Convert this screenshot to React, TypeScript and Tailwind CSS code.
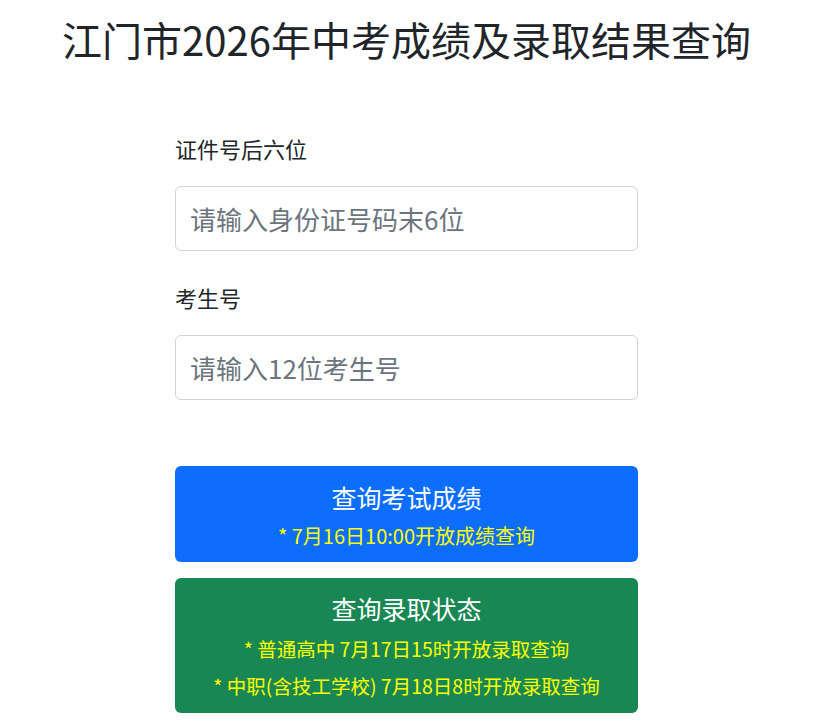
import { useState } from 'react';

const FONT = "font-['Noto_Sans_CJK_SC','Noto_Sans',sans-serif]";

interface FieldProps {
  label: string;
  placeholder: string;
  value: string;
  onChange: (v: string) => void;
  maxLength: number;
}

function Field({ label, placeholder, value, onChange, maxLength }: FieldProps) {
  return (
    <div className="flex flex-col">
      <label className="text-[22px] leading-[33px] text-[#212529]">{label}</label>
      <input
        type="text"
        value={value}
        maxLength={maxLength}
        onChange={(e) => onChange(e.target.value)}
        placeholder={placeholder}
        className={`${FONT} mt-[21px] h-[65px] w-full rounded-md border border-[#ced4da] bg-white px-[14px] text-[26px] text-[#212529] placeholder:text-[#6c757d] outline-none focus:border-[#86b7fe]`}
      />
    </div>
  );
}

export default function App() {
  const [idTail, setIdTail] = useState('');
  const [examNo, setExamNo] = useState('');

  return (
    <div className={`${FONT} min-h-[725px] w-[813px] bg-white`}>
      <h1 className="pt-[14px] text-center text-[40px] leading-[50px] text-[#212529]">
        江门市2026年中考成绩及录取结果查询
      </h1>

      <div className="mx-auto mt-[68px] w-[463px]">
        <Field
          label="证件号后六位"
          placeholder="请输入身份证号码末6位"
          value={idTail}
          onChange={setIdTail}
          maxLength={6}
        />
        <div className="mt-[30px]">
          <Field
            label="考生号"
            placeholder="请输入12位考生号"
            value={examNo}
            onChange={setExamNo}
            maxLength={12}
          />
        </div>

        {/* query buttons */}
        <button
          type="button"
          className="mt-[66px] flex w-full flex-col items-center rounded-md bg-[#0d6efd] pb-[8px] pt-[13px]"
        >
          <span className="text-[25px] leading-[36px] text-white">查询考试成绩</span>
          <span className="mt-[2px] text-[20px] leading-[37px] text-[#ffff00]">
            * 7月16日10:00开放成绩查询
          </span>
        </button>

        <button
          type="button"
          className="mt-[16px] flex w-full flex-col items-center rounded-md bg-[#198754] pb-[9px] pt-[12px]"
        >
          <span className="text-[25px] leading-[36px] text-white">查询录取状态</span>
          <span className="mt-[4px] text-[19.5px] leading-[37px] text-[#ffff00]">
            * 普通高中 7月17日15时开放录取查询
          </span>
          <span className="text-[19.5px] leading-[37px] text-[#ffff00]">
            * 中职(含技工学校) 7月18日8时开放录取查询
          </span>
        </button>
      </div>
    </div>
  );
}
